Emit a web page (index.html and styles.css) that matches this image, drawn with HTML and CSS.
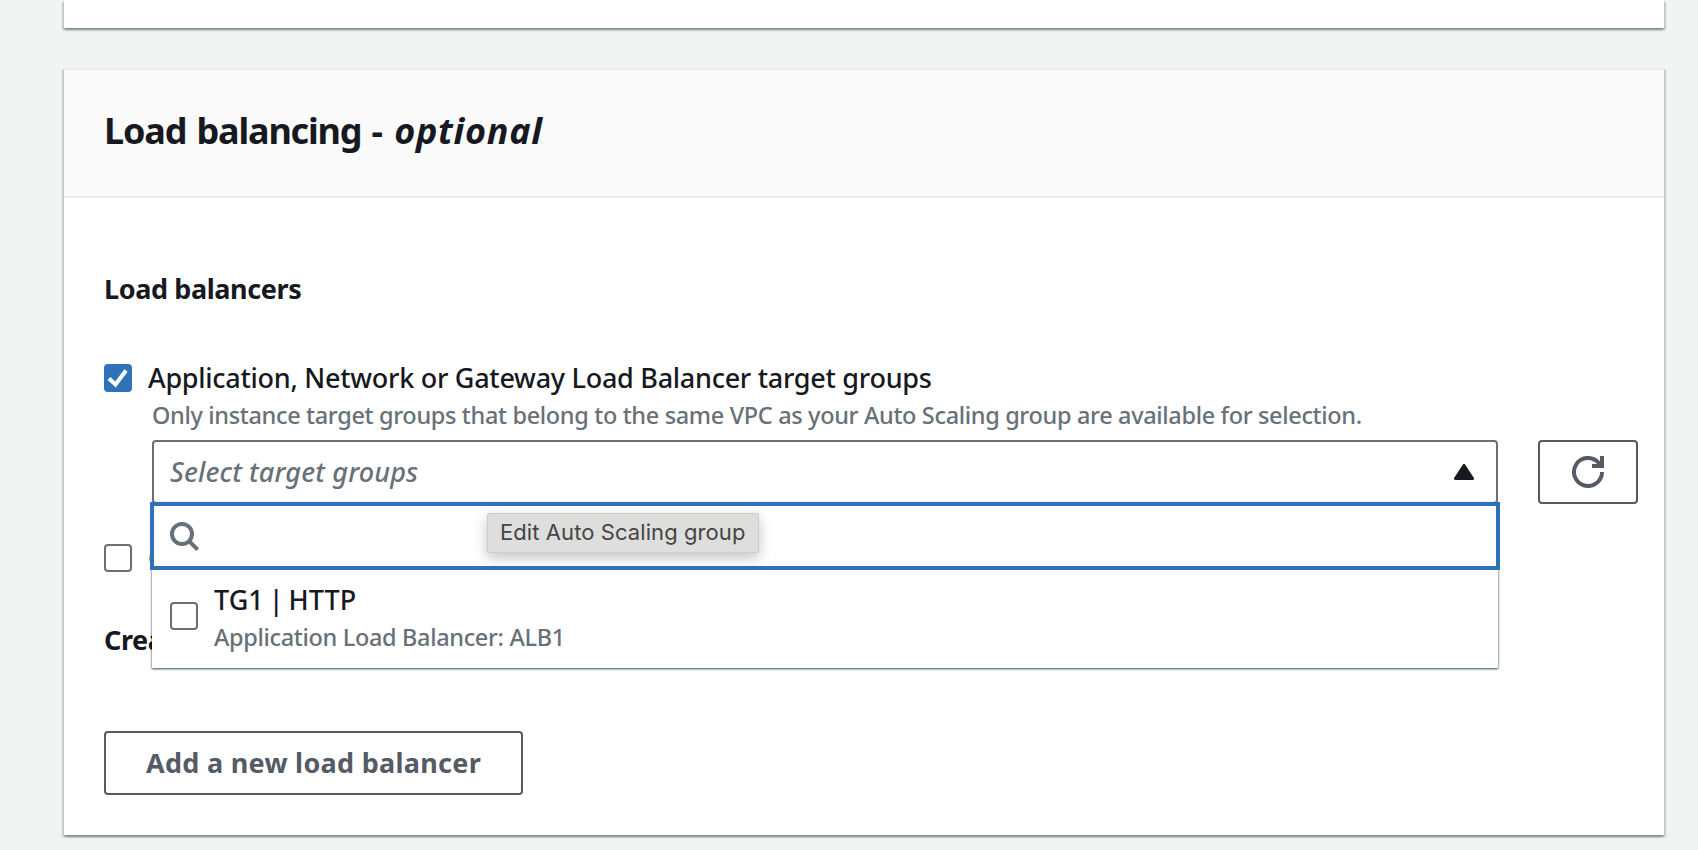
FILE: index.html
```html
<!DOCTYPE html>
<html lang="en">
<head>
<meta charset="utf-8">
<title>Load balancing</title>
<link rel="stylesheet" href="styles.css">
</head>
<body>
<main class="page">
  <section class="card card-previous"></section>
  <section class="card">
    <header class="card-header"><h2 class="title"><span class="title-main">Load balancing - </span><em class="title-optional">optional</em></h2></header>
    <div class="card-body">
      <h3 class="heading">Load balancers</h3>
      <label class="check-row">
        <span class="checkbox checked"><svg viewBox="0 0 28 28" width="28" height="28"><path d="M5 14.5 11.5 20.5 22 6.5" fill="none" stroke="#fff" stroke-width="4"/></svg></span>
        <span class="label">Application, Network or Gateway Load Balancer target groups</span>
      </label>
      <p class="description">Only instance target groups that belong to the same VPC as your Auto Scaling group are available for selection.</p>
      <div class="select-row">
        <div class="select-wrap">
          <div class="select">
            <span class="placeholder">Select target groups</span>
            <svg class="caret" viewBox="0 0 20 16" width="20" height="16"><path d="M10 1.5 18.5 14.5H1.5Z" fill="#16191f" stroke="#16191f" stroke-width="3" stroke-linejoin="round"/></svg>
          </div>
          <div class="menu">
            <div class="search">
              <svg viewBox="0 0 30 30" width="30" height="30" fill="none" stroke="#687078" stroke-width="4"><circle cx="12" cy="12" r="10"/><path d="M19 19 27.7 27.7"/></svg>
              <div class="tooltip">Edit Auto Scaling group</div>
            </div>
            <div class="option">
              <span class="checkbox"></span>
              <div class="option-text">
                <div class="option-name">TG1 | HTTP</div>
                <div class="option-detail">Application Load Balancer: ALB1</div>
              </div>
            </div>
          </div>
        </div>
        <button class="button refresh" aria-label="Refresh">
          <svg viewBox="0 0 32 32" width="32" height="32" fill="none" stroke="#545b64" stroke-width="4"><path d="M30 16A14 14 0 1 1 26 6.2L29 9.5"/><path d="M30 0V10H20"/></svg>
        </button>
      </div>
      <label class="check-row second"><span class="checkbox"></span><span class="label">C</span></label>
      <h3 class="heading create">Crea</h3>
      <button class="button add">Add a new load balancer</button>
    </div>
  </section>
</main>
</body>
</html>
```
FILE: styles.css
```css
* { box-sizing: border-box; }
body { margin: 0; background: #f2f4f3; color: #16191f; font-family: "Noto Sans", "Open Sans", sans-serif; font-weight: 500; }
h2, h3, p { margin: 0; }
.page { height: 850px; overflow: hidden; padding: 0 34px 0 64px; display: flex; flex-direction: column; gap: 40px; }
.card { background: #fff; box-shadow: 0 2px 2px rgba(0, 28, 36, .3), 2px 2px 2px rgba(0, 28, 36, .15), -2px 2px 2px rgba(0, 28, 36, .15); border-top: 2px solid #eaeded; flex: none; height: 767px; }
.card-previous { height: 28px; border-top: 0; }
.card-header { height: 128px; padding: 39px 40px 0; background: #fafafa; border-bottom: 2px solid #eaeded; }
.title { font-size: 36px; line-height: 44px; font-weight: 700; white-space: pre; }
.title-main { letter-spacing: -1.17px; word-spacing: 2px; }
.title-optional { letter-spacing: .7px; margin-left: 2px; }
.card-body { padding: 71px 26px 0 40px; }
.heading { font-size: 27px; line-height: 40px; font-weight: 700; letter-spacing: -.4px; }
.check-row { display: flex; align-items: center; gap: 16px; height: 40px; margin-top: 49px; }
.checkbox { width: 28px; height: 28px; flex: none; border: 2px solid #687078; border-radius: 4px; background: #fff; }
.checkbox.checked { border: 0; background: #2e73b8; }
.checkbox svg { display: block; }
.label { font-size: 27px; line-height: 40px; letter-spacing: -.275px; white-space: nowrap; }
.description { margin: 1px 0 0 48px; font-size: 23.5px; line-height: 32px; letter-spacing: -.34px; color: #687078; white-space: nowrap; }
.select-row { display: flex; gap: 40px; margin: 9px 0 0 48px; }
.select-wrap { position: relative; width: 1346px; }
.select { height: 64px; border: 2px solid #687078; border-radius: 4px; padding: 0 22px 0 16px; display: flex; align-items: center; justify-content: space-between; }
.placeholder { font-size: 27px; line-height: 40px; font-style: italic; color: #687078; letter-spacing: .15px; }
.menu { position: absolute; z-index: 1; left: 0; right: 0; top: 62px; height: 166px; background: #fff; box-shadow: 0 1px 2px rgba(0, 28, 36, .55), 1px 1px 2px rgba(0, 28, 36, .2), -1px 1px 2px rgba(0, 28, 36, .2); }
.search { position: relative; height: 68px; margin: 0 -2px; border: 4px solid #2e73b8; padding: 16px; }
.search svg { display: block; }
.tooltip { position: absolute; left: 333px; top: 7px; width: 272px; height: 40px; padding-left: 12px; background: #dededc; color: #454545; border: 1px solid #ccc; border-radius: 2px; box-shadow: 0 5px 14px rgba(0, 0, 0, .24); font: 22px/37px Inter, sans-serif; letter-spacing: .08px; white-space: nowrap; }
.option { display: flex; align-items: center; gap: 16px; padding: 10px 18px 0; }
.option .checkbox { margin-bottom: 2px; }
.option-name { font-size: 27px; line-height: 40px; letter-spacing: 0; word-spacing: -2px; }
.option-detail { font-size: 23.5px; line-height: 34px; color: #687078; letter-spacing: -.34px; }
.button { border: 2px solid #545b64; border-radius: 4px; background: #fff; color: #545b64; height: 64px; display: flex; align-items: center; justify-content: center; padding: 0; font: 700 27px/40px "Noto Sans", "Open Sans", sans-serif; }
.refresh { width: 100px; }
.check-row.second { margin-top: 34px; }
.heading.create { margin-top: 42px; }
.add { width: 419px; margin-top: 71px; letter-spacing: .28px; white-space: nowrap; }
```
